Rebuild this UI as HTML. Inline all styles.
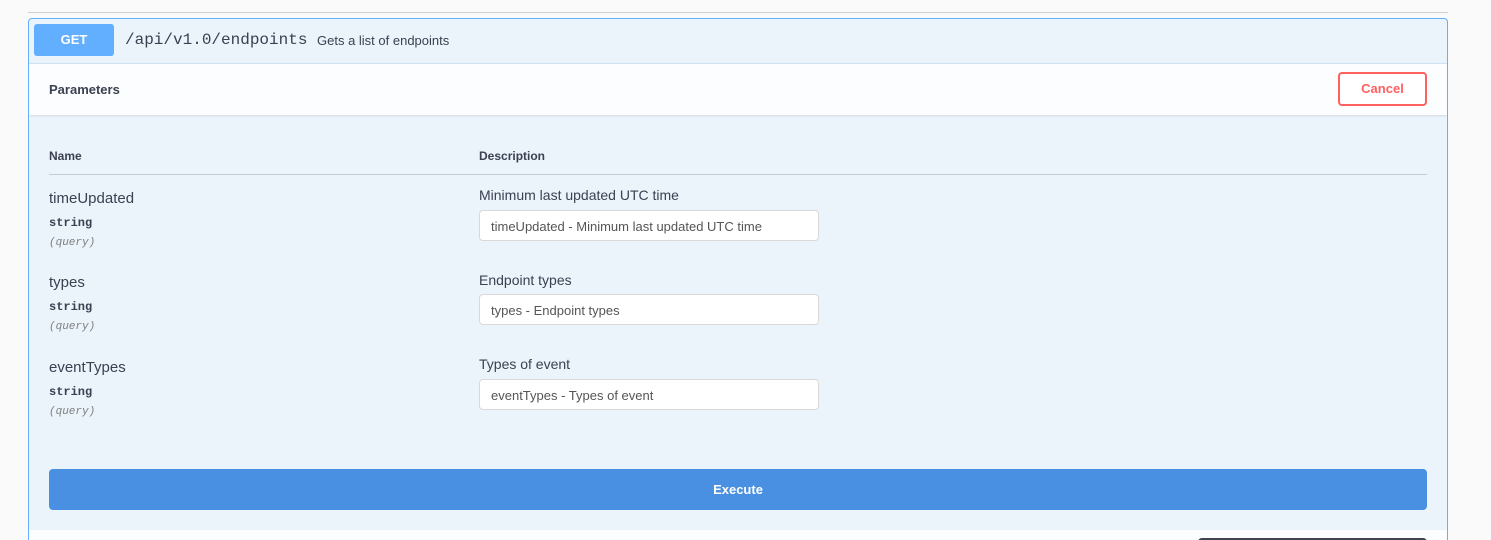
<!DOCTYPE html>
<html><head><style>
html,body{margin:0;width:1491px;height:540px;overflow:hidden}
body{background:#fafafa;font-family:"Liberation Sans",sans-serif;position:relative;color:#3b4151}
.abs{position:absolute}
.topline{left:28px;top:12px;width:1420px;height:1px;background:#d0d0d0}
.op{left:28px;top:18px;width:1418px;height:530px;border:1px solid #61affe;border-radius:4px;background:#ebf3fb;overflow:hidden}
.get{left:5px;top:5px;width:80px;height:32px;background:#61affe;border-radius:3px;color:#fff;font-weight:bold;font-size:13px;text-align:center;line-height:32px}
.path{left:96px;top:12px;font-family:"Liberation Mono",monospace;font-size:16px;color:#3b4151}
.sum{left:288px;top:14px;font-size:13px;color:#3b4151}
.params{left:0;top:44px;width:1418px;height:51px;background:#fcfdfe;border-top:1px solid #cfe3f7;box-shadow:0 1px 2px rgba(0,0,0,.1)}
.cancel{left:1309px;top:53px;width:85px;height:30px;border:2px solid #ff6060;border-radius:4px;color:#ff6060;font-weight:bold;font-size:13px;text-align:center;line-height:30px;background:#fff}
.th{font-size:12px;font-weight:bold}
.name{font-size:15px}
.type{font-family:"Liberation Mono",monospace;font-size:12px;font-weight:bold}
.q{font-family:"Liberation Mono",monospace;font-size:11px;font-style:italic;color:#808080}
.desc{font-size:14px}
.inp{height:31px;border:1px solid #d9d9d9;border-radius:4px;background:#fff;font-size:13px;line-height:31px;padding-left:11px;box-sizing:border-box;width:340px;color:#555}
.exec{left:20px;top:450px;width:1378px;height:41px;background:#4990e2;border-radius:4px;color:#fff;font-weight:bold;font-size:13px;text-align:center;line-height:41px}
.bot{left:0;top:511px;width:1418px;height:20px;background:#fcfdfe}
.dark{left:1169px;top:519px;width:229px;height:10px;background:#41444e;border-radius:4px}
</style></head><body>
<div class="abs topline"></div>
<div class="abs op">
 <div class="abs get">GET</div>
 <div class="abs path">/api/v1.0/endpoints</div>
 <div class="abs sum">Gets a list of endpoints</div>
 <div class="abs params"><div class="abs th" style="left:20px;top:18px;font-size:13px">Parameters</div></div>
 <div class="abs cancel">Cancel</div>
 <div class="abs th" style="left:20px;top:130px">Name</div>
 <div class="abs th" style="left:450px;top:130px">Description</div>
 <div class="abs" style="left:20px;top:155px;width:1378px;height:1px;background:#c5cbd6"></div>

 <div class="abs name" style="left:20px;top:171px">timeUpdated</div>
 <div class="abs type" style="left:20px;top:197px">string</div>
 <div class="abs q" style="left:20px;top:218px">(query)</div>
 <div class="abs desc" style="left:450px;top:168px">Minimum last updated UTC time</div>
 <div class="abs inp" style="left:450px;top:191px">timeUpdated - Minimum last updated UTC time</div>

 <div class="abs name" style="left:20px;top:255px">types</div>
 <div class="abs type" style="left:20px;top:281px">string</div>
 <div class="abs q" style="left:20px;top:302px">(query)</div>
 <div class="abs desc" style="left:450px;top:253px">Endpoint types</div>
 <div class="abs inp" style="left:450px;top:275px">types - Endpoint types</div>

 <div class="abs name" style="left:20px;top:340px">eventTypes</div>
 <div class="abs type" style="left:20px;top:366px">string</div>
 <div class="abs q" style="left:20px;top:387px">(query)</div>
 <div class="abs desc" style="left:450px;top:337px">Types of event</div>
 <div class="abs inp" style="left:450px;top:360px">eventTypes - Types of event</div>

 <div class="abs exec">Execute</div>
 <div class="abs bot"></div>
 <div class="abs dark"></div>
</div>
</body></html>
